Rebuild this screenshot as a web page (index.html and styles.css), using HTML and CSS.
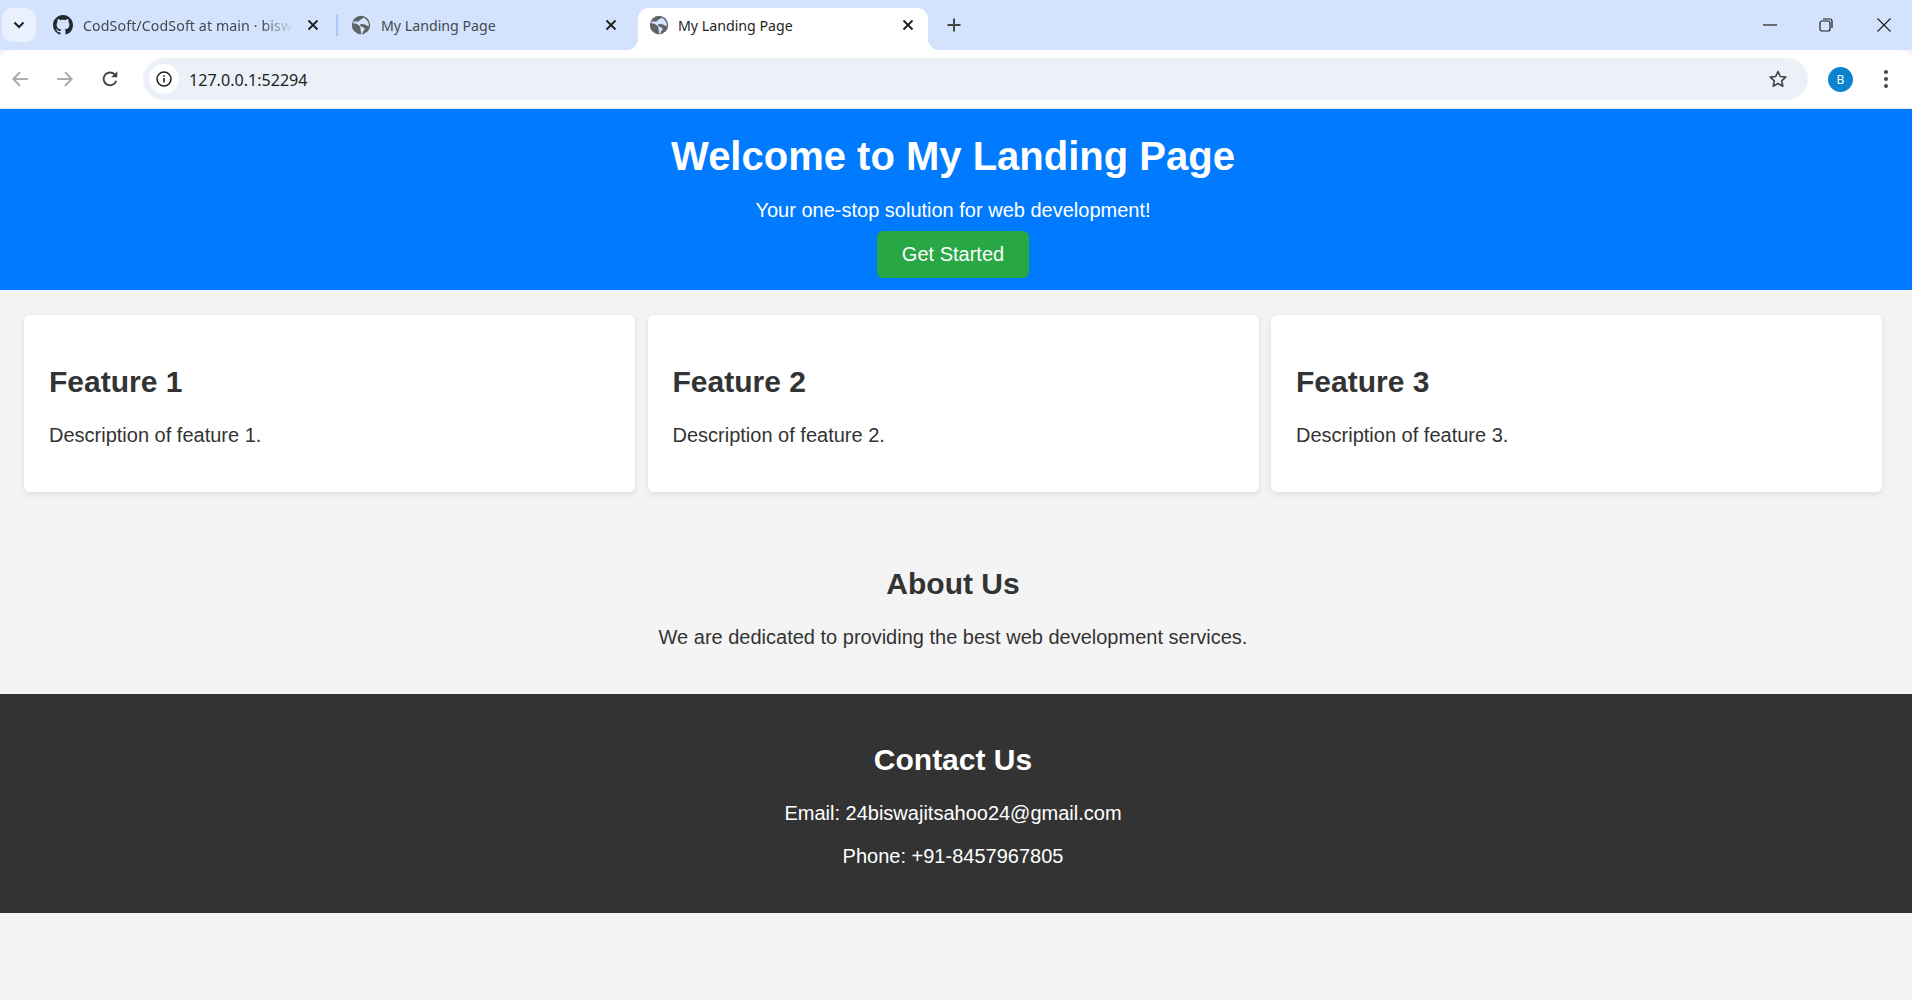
FILE: index.html
```html
<!DOCTYPE html>
<html lang="en"><head>
<title>My Landing Page</title>
<meta name="viewport" content="width=device-width, initial-scale=1">
<link rel="stylesheet" href="styles.css">
</head><body>
<svg class="defs" width="0" height="0">
  <symbol id="globe" viewBox="0 0 24 24">
    <circle cx="12" cy="12" r="11" fill="#5f6368"/>
    <path d="M16 2.500c-1 2-3 2-4.500 3S10 8 8 8 4 7.500 2.500 8.500L3 10c2 0 5 1 7 3s1 3 1.500 5 .5 3 .5 4.500l2-.5c0-2 1-3 2-4s0-3-2-3.500-3-1-3-2.500 2-1 4-1 4 1.500 6 2.500l.5-2c-1-4-3-6.500-5.500-7.500z" fill="#d3e3fd"/>
  </symbol>
  <symbol id="close" viewBox="0 0 16 16">
    <path d="M3.500 3.500l9 9M12.500 3.500l-9 9" fill="none" stroke="currentColor" stroke-width="1.800"/>
  </symbol>
</svg>

<div class="tabstrip">
  <button class="tab-search" type="button">
    <svg width="12" height="8" viewBox="0 0 12 8"><path d="M1.500 1.500L6 6l4.500-4.500" fill="none" stroke="#1f1f1f" stroke-width="2"/></svg>
  </button>
  <div class="tab tab-first">
    <svg class="favicon" viewBox="0 0 16 16"><path fill="#24292f" d="M8 0C3.580 0 0 3.580 0 8c0 3.540 2.290 6.530 5.470 7.590.4.070.55-.17.55-.38 0-.19-.01-.82-.01-1.490-2.010.37-2.530-.49-2.690-.94-.09-.23-.48-.94-.82-1.130-.28-.15-.68-.52-.01-.53.63-.01 1.080.58 1.230.82.720 1.210 1.870.87 2.330.66.070-.52.280-.87.510-1.070-1.780-.2-3.640-.89-3.640-3.950 0-.87.310-1.590.820-2.150-.08-.2-.36-1.020.08-2.120 0 0 .67-.21 2.200.82.640-.18 1.320-.27 2-.27s1.360.09 2 .27c1.530-1.040 2.200-.82 2.200-.82.440 1.100.160 1.920.08 2.120.510.560.820 1.270.820 2.150 0 3.070-1.870 3.750-3.650 3.950.290.250.540.730.540 1.480 0 1.070-.01 1.930-.01 2.200 0 .21.150.46.550.38A8.010 8.010 0 0 0 16 8c0-4.420-3.580-8-8-8z"/></svg>
    <span class="tab-title fade">CodSoft/CodSoft at main · bisw</span>
    <svg class="tab-close"><use href="#close"/></svg>
  </div>
  <div class="tab tab-second">
    <svg class="favicon"><use href="#globe"/></svg>
    <span class="tab-title">My Landing Page</span>
    <svg class="tab-close"><use href="#close"/></svg>
  </div>
  <div class="tab tab-active">
    <svg class="favicon"><use href="#globe"/></svg>
    <span class="tab-title">My Landing Page</span>
    <svg class="tab-close"><use href="#close"/></svg>
  </div>
  <svg class="new-tab" width="16" height="16" viewBox="0 0 16 16"><path d="M8 1.500v13M1.500 8h13" stroke="#444746" stroke-width="2"/></svg>
  <div class="window-controls">
    <svg class="win-min" width="14" height="14" viewBox="0 0 14 14"><path d="M0 7h14" stroke="#1f1f1f" stroke-width="1.200"/></svg>
    <svg width="14" height="14" viewBox="0 0 14 14"><rect x="1" y="3" width="10" height="10" rx="2" fill="none" stroke="#1f1f1f" stroke-width="1.200"/><path d="M4 1h7a2 2 0 0 1 2 2v7" fill="none" stroke="#1f1f1f" stroke-width="1.200"/></svg>
    <svg width="14" height="14" viewBox="0 0 14 14"><path d="M.5.500l13 13M13.500.500l-13 13" stroke="#1f1f1f" stroke-width="1.200"/></svg>
  </div>
</div>

<div class="toolbar">
  <svg class="nav-icon" viewBox="0 0 16 16"><path d="M15 8H2M8 2L2 8l6 6" fill="none" stroke="#a8abaf" stroke-width="1.700"/></svg>
  <svg class="nav-icon" viewBox="0 0 16 16"><path d="M1 8h13M8 2l6 6-6 6" fill="none" stroke="#a8abaf" stroke-width="1.700"/></svg>
  <svg class="nav-icon" viewBox="0 0 16 16"><path d="M13.500 9.500A5.700 5.700 0 1 1 12 3.800" fill="none" stroke="#444746" stroke-width="1.700"/><path d="M14.500 1v5.500H9z" fill="#444746"/></svg>
  <div class="omnibox">
    <span class="site-info">
      <svg width="16" height="16" viewBox="0 0 16 16"><circle cx="8" cy="8" r="7" fill="none" stroke="#1f1f1f" stroke-width="1.500"/><path d="M8 7v4.500M8 4.200v1.500" stroke="#1f1f1f" stroke-width="1.600"/></svg>
    </span>
    <span class="url">127.0.0.1:52294</span>
    <svg class="star" width="20" height="20" viewBox="0 0 20 20"><path d="M10 2.500l2.300 5 5.400.6-4 3.700 1.100 5.400-4.800-2.700-4.800 2.700 1.100-5.400-4-3.700 5.400-.6z" fill="none" stroke="#444746" stroke-width="1.700" stroke-linejoin="round"/></svg>
  </div>
  <span class="avatar">B</span>
  <svg class="menu" width="4" height="18" viewBox="0 0 4 18"><circle cx="2" cy="2" r="2" fill="#444746"/><circle cx="2" cy="9" r="2" fill="#444746"/><circle cx="2" cy="16" r="2" fill="#444746"/></svg>
</div>

<header class="hero">
  <h1>Welcome to My Landing Page</h1>
  <p>Your one-stop solution for web development!</p>
  <a class="btn" href="#">Get Started</a>
</header>

<section class="features">
  <div class="feature">
    <h2>Feature 1</h2>
    <p>Description of feature 1.</p>
  </div>
  <div class="feature">
    <h2>Feature 2</h2>
    <p>Description of feature 2.</p>
  </div>
  <div class="feature">
    <h2>Feature 3</h2>
    <p>Description of feature 3.</p>
  </div>
</section>

<section class="about">
  <h2>About Us</h2>
  <p>We are dedicated to providing the best web development services.</p>
</section>

<footer class="contact">
  <h2>Contact Us</h2>
  <p>Email: 24biswajitsahoo24@gmail.com</p>
  <p>Phone: +91-8457967805</p>
</footer>
</body></html>
```

FILE: styles.css
```css
* { box-sizing: border-box; }
body { margin: 0; background: #f4f4f4; color: #333; font-family: "Liberation Sans", Arial, sans-serif; font-size: 20px; }
.defs { display: block; height: 0; }

/* browser chrome */
.tabstrip { display: flex; align-items: flex-end; height: 50px; background: #d3e3fd; font-family: "Noto Sans", sans-serif; }
.tab-search { align-self: flex-start; display: flex; align-items: center; justify-content: center; width: 34px; height: 34px; margin: 8px 6px 0 2px; padding: 0; border: none; border-radius: 10px; background: #e9f0fe; }
.tab { position: relative; display: flex; align-items: center; height: 42px; padding: 0 19px 8px 11px; font-size: 14.200px; color: #45494e; }
.tab .favicon { margin-right: 10px; }
.tab-first { width: 296px; padding-right: 17px; }
.tab-first .tab-title { letter-spacing: 0.100px; }
.tab-first::after { content: ""; position: absolute; right: 0; top: 7px; width: 2px; height: 21px; background: #a8c7fa; }
.tab-second { width: 298px; margin-left: 2px; }
.tab-active { width: 290px; padding-right: 12px; background: #fff; border-radius: 11px 11px 0 0; color: #1f1f1f; }
.tab-active .favicon { margin-right: 9px; }
.tab-active::before, .tab-active::after { content: ""; position: absolute; bottom: 0; width: 12px; height: 12px; }
.tab-active::before { left: -12px; background: radial-gradient(circle at 0 0, transparent 12px, #fff 12.500px); }
.tab-active::after { right: -12px; background: radial-gradient(circle at 100% 0, transparent 12px, #fff 12.500px); }
.favicon { flex: none; width: 20px; height: 20px; }
.tab-title { flex: 1; overflow: hidden; white-space: nowrap; }
.fade { -webkit-mask-image: linear-gradient(90deg, #000 85%, transparent 100%); mask-image: linear-gradient(90deg, #000 85%, transparent 100%); }
.tab-close { flex: none; width: 16px; height: 16px; margin-left: 12px; color: #1f1f1f; }
.new-tab { align-self: center; margin: 0 0 0 18px; }
.window-controls { display: flex; align-items: center; gap: 44px; align-self: flex-start; height: 50px; margin-left: auto; padding-right: 21px; }
.win-min { margin-right: -2px; }
.toolbar { display: flex; align-items: center; height: 59px; background: #fff; border-bottom: 1px solid #e3e8ef; border-radius: 10px 10px 0 0; padding-left: 11px; box-shadow: 0 -10px 0 -9px #d3e3fd; }
.nav-icon { flex: none; width: 18px; height: 18px; margin-right: 27px; }
.nav-icon:nth-child(3) { margin-right: 24px; }
.omnibox { flex: none; display: flex; align-items: center; width: 1665px; height: 42px; padding-left: 6px; padding-right: 20px; border-radius: 21px; background: #ecf1f9; }
.site-info { display: flex; align-items: center; justify-content: center; width: 30px; height: 30px; border-radius: 50%; background: #fff; }
.url { margin: 1px 0 0 10px; font-family: "Noto Sans", sans-serif; font-size: 16.100px; color: #1f1f1f; }
.star { margin-left: auto; }
.avatar { flex: none; display: flex; align-items: center; justify-content: center; width: 25px; height: 25px; margin-left: 20px; border-radius: 50%; background: #0a84d0; color: #fff; font-family: "Noto Sans", sans-serif; font-size: 12px; }
.menu { flex: none; margin-left: 31px; }

/* page */
.hero { padding: 25px 6px 12px 0; background: #007bff; color: #fff; text-align: center; }
.hero h1 { margin: 0 0 20px; font-size: 40px; }
.hero p { margin: 0 0 9px; }
.btn { display: inline-block; padding: 12px 25px; border-radius: 6px; background: #28a745; color: #fff; text-decoration: none; }
.features { display: flex; gap: 12.500px; padding: 25px 30px 25px 24px; }
.feature { flex: 1; padding: 25px; background: #fff; border-radius: 6px; box-shadow: 0 2px 6px rgba(0,0,0,0.1); }
h2 { margin: 25px 0; font-size: 30px; }
p { margin: 20px 0; }
.about { padding: 25px 6px 25px 0; text-align: center; }
.contact { padding: 24px 6px 25px 0; background: #333; color: #fff; text-align: center; }
```
